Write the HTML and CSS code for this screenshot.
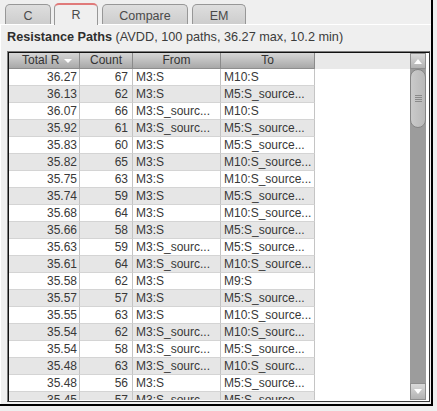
FILE: index.html
```html
<!DOCTYPE html>
<html>
<head>
<meta charset="utf-8">
<link rel="stylesheet" href="styles.css">
</head>
<body>
<div class="frame">
  <div class="tabs">
    <div class="tab tab-c">C</div>
    <div class="tab tab-r active">R</div>
    <div class="tab tab-compare">Compare</div>
    <div class="tab tab-em">EM</div>
  </div>
  <div class="panel">
    <div class="title"><b>Resistance Paths</b> (AVDD, 100 paths, 36.27 max, 10.2 min)</div>
    <div class="box">
      <div class="box-inner">
        <div class="grid-area">
          <div class="thead">
            <div class="th c1 th-total">Total R<span class="sort"></span></div>
            <div class="th c2">Count</div>
            <div class="th c3">From</div>
            <div class="th c4">To</div>
            <div class="th-fill"></div>
          </div>
          <div class="tbody">
            <div class="tr"><div class="td c1 num">36.27</div><div class="td c2 cnt">67</div><div class="td c3 txt">M3:S</div><div class="td c4 txt">M10:S</div></div>
            <div class="tr"><div class="td c1 num">36.13</div><div class="td c2 cnt">62</div><div class="td c3 txt">M3:S</div><div class="td c4 txt">M5:S_source...</div></div>
            <div class="tr"><div class="td c1 num">36.07</div><div class="td c2 cnt">66</div><div class="td c3 txt">M3:S_sourc...</div><div class="td c4 txt">M10:S</div></div>
            <div class="tr"><div class="td c1 num">35.92</div><div class="td c2 cnt">61</div><div class="td c3 txt">M3:S_sourc...</div><div class="td c4 txt">M5:S_source...</div></div>
            <div class="tr"><div class="td c1 num">35.83</div><div class="td c2 cnt">60</div><div class="td c3 txt">M3:S</div><div class="td c4 txt">M5:S_source...</div></div>
            <div class="tr"><div class="td c1 num">35.82</div><div class="td c2 cnt">65</div><div class="td c3 txt">M3:S</div><div class="td c4 txt">M10:S_source...</div></div>
            <div class="tr"><div class="td c1 num">35.75</div><div class="td c2 cnt">63</div><div class="td c3 txt">M3:S</div><div class="td c4 txt">M10:S_source...</div></div>
            <div class="tr"><div class="td c1 num">35.74</div><div class="td c2 cnt">59</div><div class="td c3 txt">M3:S</div><div class="td c4 txt">M5:S_source...</div></div>
            <div class="tr"><div class="td c1 num">35.68</div><div class="td c2 cnt">64</div><div class="td c3 txt">M3:S</div><div class="td c4 txt">M10:S_source...</div></div>
            <div class="tr"><div class="td c1 num">35.66</div><div class="td c2 cnt">58</div><div class="td c3 txt">M3:S</div><div class="td c4 txt">M5:S_source...</div></div>
            <div class="tr"><div class="td c1 num">35.63</div><div class="td c2 cnt">59</div><div class="td c3 txt">M3:S_sourc...</div><div class="td c4 txt">M5:S_source...</div></div>
            <div class="tr"><div class="td c1 num">35.61</div><div class="td c2 cnt">64</div><div class="td c3 txt">M3:S_sourc...</div><div class="td c4 txt">M10:S_source...</div></div>
            <div class="tr"><div class="td c1 num">35.58</div><div class="td c2 cnt">62</div><div class="td c3 txt">M3:S</div><div class="td c4 txt">M9:S</div></div>
            <div class="tr"><div class="td c1 num">35.57</div><div class="td c2 cnt">57</div><div class="td c3 txt">M3:S</div><div class="td c4 txt">M5:S_source...</div></div>
            <div class="tr"><div class="td c1 num">35.55</div><div class="td c2 cnt">63</div><div class="td c3 txt">M3:S</div><div class="td c4 txt">M10:S_source...</div></div>
            <div class="tr"><div class="td c1 num">35.54</div><div class="td c2 cnt">62</div><div class="td c3 txt">M3:S_sourc...</div><div class="td c4 txt">M10:S_sourc...</div></div>
            <div class="tr"><div class="td c1 num">35.54</div><div class="td c2 cnt">58</div><div class="td c3 txt">M3:S_sourc...</div><div class="td c4 txt">M5:S_source...</div></div>
            <div class="tr"><div class="td c1 num">35.48</div><div class="td c2 cnt">63</div><div class="td c3 txt">M3:S_sourc...</div><div class="td c4 txt">M10:S_sourc...</div></div>
            <div class="tr"><div class="td c1 num">35.48</div><div class="td c2 cnt">56</div><div class="td c3 txt">M3:S</div><div class="td c4 txt">M5:S_source...</div></div>
            <div class="tr"><div class="td c1 num">35.45</div><div class="td c2 cnt">57</div><div class="td c3 txt">M3:S_sourc...</div><div class="td c4 txt">M5:S_source...</div></div>
          </div>
        </div>
        <div class="scrollbar">
          <div class="sb-btn sb-up"><span class="arrow-up"></span></div>
          <div class="thumb"><span class="grip"></span></div>
          <div class="sb-track"></div>
          <div class="sb-btn sb-down"><span class="arrow-down"></span></div>
        </div>
      </div>
    </div>
  </div>
</div>
</body>
</html>
```
FILE: styles.css
```css
html, body {
  margin: 0;
  padding: 0;
  background: #efefef;
  width: 437px;
  height: 411px;
  overflow: hidden;
}
body {
  font-family: "Liberation Sans", Arial, sans-serif;
  font-size: 12px;
  color: #383838;
}
.frame {
  width: 431px;
  height: 404px;
  border-right: 2px solid #000;
  border-bottom: 2px solid #000;
}
.tabs {
  display: flex;
  align-items: flex-end;
  height: 24px;
  padding-left: 5px;
  box-sizing: border-box;
}
.tab {
  box-sizing: border-box;
  height: 20px;
  border: 1px solid #979797;
  border-bottom: none;
  border-radius: 5px 5px 0 0;
  background: linear-gradient(#dedede, #cdcdcd);
  text-align: center;
  line-height: 16px;
  padding-top: 3px;
  color: #4a4a4a;
  margin-right: 4px;
  font-size: 12.5px;
}
.tab-c { width: 46px; margin-right: 3px; }
.tab-r { width: 44px; }
.tab-compare { width: 86px; }
.tab-em { width: 54px; }
.tab.active {
  height: 22px;
  margin-bottom: -1px;
  position: relative;
  z-index: 1;
  background: #efefef;
  border-top: 2px solid #e07a7a;
  padding-top: 2px;
}
.panel {
  border-top: 1px solid #fff;
  border-left: 1px solid #fff;
  padding: 0 1px 2px 6px;
}
.title {
  height: 26px;
  box-sizing: border-box;
  padding-top: 5px;
  line-height: 14px;
  white-space: nowrap;
  color: #3c3c3c;
  font-size: 12.7px;
}
.title b {
  color: #2e2e2e;
}
.box {
  width: 423px;
  height: 351px;
  box-sizing: border-box;
  border-top: 1px solid #7c7c7c;
  border-left: 1px solid #7c7c7c;
  border-right: 1px solid #3a3a3a;
  border-bottom: 1px solid #3a3a3a;
  background: #fff;
}
.box-inner {
  height: 100%;
  box-sizing: border-box;
  border-top: 1px solid #111;
  border-left: 1px solid #111;
  padding: 0 3px 1px 0;
  display: flex;
}
.grid-area {
  width: 401px;
  display: flex;
  flex-direction: column;
  overflow: hidden;
  background: #fff;
}
.thead {
  display: flex;
  height: 16px;
  flex: none;
}
.th {
  box-sizing: border-box;
  height: 16px;
  line-height: 15px;
  border-right: 1px solid #8a8a8a;
  border-bottom: 1px solid #8e8e8e;
  background: linear-gradient(#d6d6d6, #a8a8a8);
  text-align: center;
  color: #333;
  white-space: nowrap;
}
.th-total {
  text-align: left;
  padding-left: 13px;
}
.th-fill {
  flex: 1;
  background: #e9e9e9;
}
.sort {
  display: inline-block;
  width: 0;
  height: 0;
  border-left: 4px solid transparent;
  border-right: 4px solid transparent;
  border-top: 4px solid #fff;
  vertical-align: middle;
  margin-left: 5px;
}
.c1 { width: 71px; }
.c2 { width: 53px; }
.c3 { width: 88px; }
.c4 { width: 94px; }
.tbody {
  flex: 1;
  overflow: hidden;
}
.tr {
  display: flex;
  height: 17px;
}
.td {
  box-sizing: border-box;
  height: 17px;
  line-height: 16px;
  border-right: 1px solid #c4c4c4;
  border-bottom: 1px solid #d4d4d4;
  white-space: nowrap;
  overflow: hidden;
  background: #fff;
}
.tr:nth-child(even) .td {
  background: #e6e6e6;
}
.num { text-align: right; padding-right: 2px; }
.cnt { text-align: right; padding-right: 4px; }
.txt { padding-left: 3px; }
.c4.txt { padding-left: 3px; }
.scrollbar {
  width: 16px;
  display: flex;
  flex-direction: column;
  background: #9c9c9c;
}
.sb-btn {
  flex: none;
  height: 16px;
  box-sizing: border-box;
  background: linear-gradient(#dadada, #b2b2b2);
  border: 1px solid #8e8e8e;
  display: flex;
  align-items: center;
  justify-content: center;
}
.sb-down {
  height: 17px;
}
.arrow-up {
  width: 0;
  height: 0;
  border-left: 4px solid transparent;
  border-right: 4px solid transparent;
  border-bottom: 5px solid #fff;
}
.arrow-down {
  width: 0;
  height: 0;
  border-left: 4px solid transparent;
  border-right: 4px solid transparent;
  border-top: 5px solid #fff;
}
.thumb {
  flex: none;
  height: 59px;
  box-sizing: border-box;
  border: 1px solid #858585;
  border-radius: 8px;
  background: linear-gradient(90deg, #cacaca, #b9b9b9);
  display: flex;
  align-items: center;
  justify-content: center;
}
.grip {
  width: 7px;
  height: 7px;
  background: repeating-linear-gradient(#8a8a8a 0, #8a8a8a 1px, transparent 1px, transparent 2px);
}
.sb-track {
  flex: 1;
}
```
